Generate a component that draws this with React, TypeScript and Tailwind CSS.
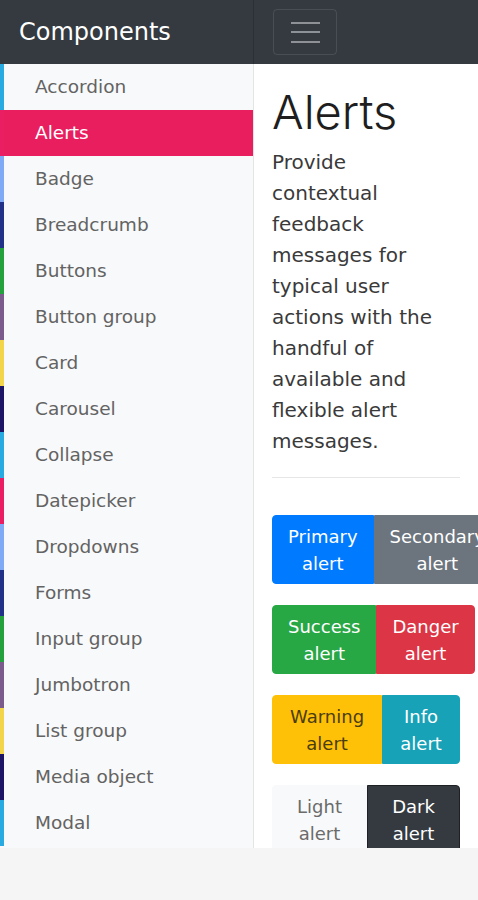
const items = [
  'Accordion',
  'Alerts',
  'Badge',
  'Breadcrumb',
  'Buttons',
  'Button group',
  'Card',
  'Carousel',
  'Collapse',
  'Datepicker',
  'Dropdowns',
  'Forms',
  'Input group',
  'Jumbotron',
  'List group',
  'Media object',
  'Modal',
];

// strip colours repeat every 8 rows
const strips = [
  'bg-[#29abe2]',
  'bg-[#e91e63]',
  'bg-[#80a9f6]',
  'bg-[#223188]',
  'bg-[#24a03c]',
  'bg-[#7b5a8c]',
  'bg-[#f2d54b]',
  'bg-[#1c1566]',
];

type Alert = { label: string; cls: string };

const groups: Alert[][] = [
  [
    { label: 'Primary', cls: 'bg-[#007bff] border-[#007bff] text-white' },
    { label: 'Secondary', cls: 'bg-[#6c757d] border-[#6c757d] text-white' },
  ],
  [
    { label: 'Success', cls: 'bg-[#28a745] border-[#28a745] text-white' },
    { label: 'Danger', cls: 'bg-[#dc3545] border-[#dc3545] text-white' },
  ],
  [
    { label: 'Warning', cls: 'bg-[#ffc107] border-[#ffc107] text-[#4a3d10]' },
    { label: 'Info', cls: 'bg-[#17a2b8] border-[#17a2b8] text-white' },
  ],
  [
    { label: 'Light', cls: 'bg-[#f8f9fa] border-[#f8f9fa] text-[#6b6b6b]' },
    { label: 'Dark', cls: 'bg-[#343a40] border-[#1d2124] text-white' },
  ],
];

export default function App() {
  return (
    <div className="w-[478px] h-[900px] bg-[#f5f5f5] font-['DejaVu_Sans',sans-serif]">
      <div className="h-[848px] overflow-hidden flex flex-col">
        <header className="h-16 shrink-0 bg-[#343a40] flex">
          <div className="w-[254px] shrink-0 border-r border-[#2b3035] flex items-center pl-[19px] text-white text-[24px]">
            Components
          </div>
          <div className="flex items-center pl-[19px]">
            <button className="w-16 h-[46px] border border-white/10 rounded flex flex-col items-center justify-center gap-[7.5px]">
              <span className="block w-[29px] h-[2px] bg-[#8e9296]" />
              <span className="block w-[29px] h-[2px] bg-[#8e9296]" />
              <span className="block w-[29px] h-[2px] bg-[#8e9296]" />
            </button>
          </div>
        </header>

        <div className="flex flex-1 min-h-0">
          <nav className="w-[254px] shrink-0 bg-[#f8f9fa] border-r border-[#e4e4e4]">
            {items.map((name, i) => {
              const active = name === 'Alerts';
              return (
                <div
                  key={name}
                  className={`h-[46px] flex items-center ${active ? 'bg-[#e91e5f] text-white' : 'text-[#636363]'}`}
                >
                  <div className={`w-1 h-full shrink-0 ${strips[i % 8]}`} />
                  <span className="pl-[31px] text-[18.5px]">{name}</span>
                </div>
              );
            })}
          </nav>

          <main className="flex-1 min-w-0 bg-white px-[18px] pt-5 overflow-hidden">
            <h1 className="font-['Inter',sans-serif] text-[47px] leading-[55px] font-light text-[#1e1e1e] mb-2">
              Alerts
            </h1>
            <p className="max-w-[182px] text-[20px] leading-[31px] text-[#3a3a3a] mb-5">
              Provide contextual feedback messages for typical user actions with the handful of available and flexible
              alert messages.
            </p>
            <hr className="border-t border-[#e6e6e6] mb-[37px]" />

            {groups.map((g, gi) => (
              <div key={gi} className="flex mb-[21px]">
                {g.map((a, ai) => (
                  <div
                    key={a.label}
                    className={`flex-[1_0_auto] border px-[15px] py-[6.5px] text-center text-[18px] leading-[27px] ${a.cls} ${ai === 0 ? 'rounded-l' : 'rounded-r'}`}
                  >
                    {a.label}
                    <br />
                    alert
                  </div>
                ))}
              </div>
            ))}
          </main>
        </div>
      </div>
    </div>
  );
}
